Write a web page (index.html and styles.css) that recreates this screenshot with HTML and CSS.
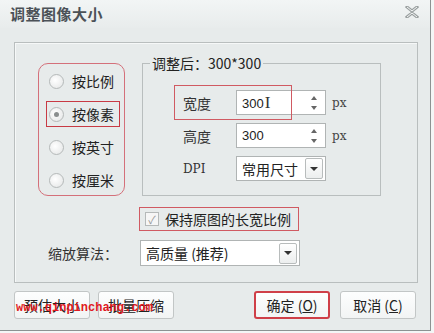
FILE: index.html
```html
<!DOCTYPE html>
<html lang="zh-CN">
<head>
  <meta charset="UTF-8" />
  <title>调整图像大小</title>
  <link rel="stylesheet" href="styles.css">
</head>
<body>
  <div class="window">
    <div class="titlebar">
      <span class="title">调整图像大小</span>
      <svg class="close" width="14" height="12" viewBox="0 0 14 12">
        <path d="M2 1 L7 5 L12 1 M2 11 L7 7 L12 11 M7 5 L7 7" stroke="#9aa0a0" stroke-width="3" fill="none" stroke-linecap="square"/>
        <path d="M2 1 L7 5 L12 1 M2 11 L7 7 L12 11" stroke="#f4f6f6" stroke-width="1" fill="none"/>
      </svg>
    </div>

    <div class="group">
      <div class="top-row">
        <div class="mode-box">
          <label class="mode"><span class="radio"></span>按比例</label>
          <label class="mode selected"><span class="radio checked"></span>按像素</label>
          <label class="mode"><span class="radio"></span>按英寸</label>
          <label class="mode"><span class="radio"></span>按厘米</label>
        </div>

        <fieldset class="size-box">
          <legend>调整后：300*300</legend>
          <div class="size-grid">
            <div class="mark"></div>
            <span class="size-label">宽度</span>
            <div class="spin">
              <span class="value">300<span class="caret">I</span></span>
              <span class="arrows"><i class="up"></i><i class="down"></i></span>
            </div>
            <span class="unit">px</span>

            <span class="size-label">高度</span>
            <div class="spin">
              <span class="value">300</span>
              <span class="arrows"><i class="up"></i><i class="down"></i></span>
            </div>
            <span class="unit">px</span>

            <span class="size-label dpi">DPI</span>
            <div class="select small">
              <span class="value">常用尺寸</span>
              <span class="drop"><i></i></span>
            </div>
          </div>
        </fieldset>
      </div>

      <label class="keep">
        <span class="check">✓</span>保持原图的长宽比例
      </label>

      <div class="algo-row">
        <span class="algo-label">缩放算法：</span>
        <div class="select wide">
          <span class="value">高质量 (推荐)</span>
          <span class="drop"><i></i></span>
        </div>
      </div>
    </div>

    <div class="buttons">
      <button class="btn">预估大小</button>
      <button class="btn">批量压缩</button>
      <span class="spacer"></span>
      <button class="btn primary">确定 (<u>O</u>)</button>
      <button class="btn">取消 (<u>C</u>)</button>
      <span class="watermark">www.qinpinchang.com</span>
    </div>
  </div>
</body>
</html>
```

FILE: styles.css
```css
body {
  margin: 0;
  background: #f4f6f6;
  font-family: "Noto Sans CJK SC", "Liberation Sans", sans-serif;
  font-size: 14px;
  color: #222;
}

.window {
  position: relative;
  width: 430px;
  height: 330px;
  background: #e7ebeb;
  border-right: 1px solid #8c9292;
  border-bottom: 1px solid #8c9292;
}

.titlebar {
  height: 28px;
  display: flex;
  align-items: center;
  justify-content: space-between;
  padding: 0 11px 0 10px;
  background: linear-gradient(#f2f5f5, #e8ecec);
}

.title {
  font-weight: bold;
  font-size: 15px;
  color: #4b5157;
  letter-spacing: 0.5px;
  margin-top: -2px;
}

.close {
  margin-top: -4px;
}

.group {
  margin: 14px 0 0 14px;
  width: 402px;
  height: 239px;
  border: 1px solid #b9bebe;
  box-shadow: inset 1px 1px 0 #f6f8f8;
}

.top-row {
  display: flex;
  align-items: flex-start;
  gap: 17px;
  padding: 20px 0 0 23px;
}

.mode-box {
  width: 78px;
  height: 127px;
  border: 1.5px solid #d4707a;
  border-radius: 10px;
  padding: 4px 0 0 7px;
  display: flex;
  flex-direction: column;
  gap: 7px;
}

.mode {
  width: 70px;
  height: 24px;
  display: flex;
  align-items: center;
  gap: 8px;
  padding-left: 2px;
  border: 1px solid transparent;
  font-size: 14px;
  color: #222;
}

.mode.selected {
  border-color: #c83a44;
}

.radio {
  width: 13px;
  height: 13px;
  border-radius: 50%;
  border: 1px solid #b5b9b9;
  background: radial-gradient(circle at 40% 40%, #ffffff, #e2e4e4);
  display: flex;
  align-items: center;
  justify-content: center;
}

.radio.checked::after {
  content: "";
  width: 5px;
  height: 5px;
  border-radius: 50%;
  background: #8a8e8e;
}

.size-box {
  margin: -8px 0 0 0;
  width: 197px;
  height: 120px;
  border: 1px solid #b9bebe;
  padding: 19px 0 0 40px;
}

.size-box legend {
  padding: 0 2px;
  margin-left: -33px;
  font-size: 14px;
  color: #222;
  line-height: 16px;
}

.size-grid {
  position: relative;
  display: grid;
  grid-template-columns: 53px 90px auto;
  grid-auto-rows: 25px;
  row-gap: 8px;
  align-items: center;
}

.mark {
  position: absolute;
  left: -9px;
  top: -5px;
  width: 116px;
  height: 33px;
  border: 1px solid #d05a62;
}

.size-label {
  font-size: 14px;
  color: #333;
}

.size-label.dpi {
  font-family: "DejaVu Serif", "Liberation Serif", serif;
  font-size: 12px;
}

.spin,
.select {
  height: 25px;
  box-sizing: border-box;
  background: #fff;
  border: 1px solid #b0b4b4;
  display: flex;
  align-items: center;
  justify-content: space-between;
}

.spin .value,
.select .value {
  padding-left: 5px;
  font-family: "Liberation Sans", "Noto Sans CJK SC", sans-serif;
  font-size: 13px;
  color: #222;
}

.select .value {
  font-family: "Noto Sans CJK SC", sans-serif;
  font-size: 14px;
}

.caret {
  font-family: "Liberation Serif", serif;
  font-size: 17px;
  color: #333;
  margin-left: 1px;
}

.arrows {
  display: flex;
  flex-direction: column;
  gap: 6px;
  padding-right: 8px;
}

.arrows i {
  width: 0;
  height: 0;
  border-left: 3px solid transparent;
  border-right: 3px solid transparent;
}

.arrows .up {
  border-bottom: 4px solid #666;
}

.arrows .down {
  border-top: 4px solid #666;
}

.unit {
  padding-left: 6px;
  font-family: "DejaVu Serif", "Liberation Serif", serif;
  font-size: 12px;
  color: #444;
}

.drop {
  width: 16px;
  height: 19px;
  margin-right: 2px;
  border: 1px solid #b8bcbc;
  border-radius: 2px;
  background: linear-gradient(#ffffff, #eceeee);
  display: flex;
  align-items: center;
  justify-content: center;
}

.drop i {
  width: 0;
  height: 0;
  border-left: 4px solid transparent;
  border-right: 4px solid transparent;
  border-top: 4px solid #333;
}

.keep {
  margin: 11px 0 0 124px;
  width: 153px;
  height: 22px;
  border: 1px solid #d05a62;
  display: flex;
  align-items: center;
  gap: 6px;
  padding-left: 5px;
  font-size: 14px;
  color: #222;
}

.check {
  width: 12px;
  height: 12px;
  border: 1px solid #b5b9b9;
  background: #f6f6f6;
  color: #999;
  font-size: 11px;
  line-height: 12px;
  text-align: center;
}

.algo-row {
  display: flex;
  align-items: center;
  margin: 9px 0 0 33px;
}

.algo-label {
  width: 92px;
  font-size: 14px;
  color: #333;
}

.select.wide {
  width: 160px;
  height: 26px;
}

.select.small {
  width: 90px;
}

.buttons {
  position: relative;
  display: flex;
  gap: 8px;
  margin: 8px 0 0 14px;
  width: 402px;
}

.spacer {
  flex: 1;
}

.btn {
  width: 76px;
  height: 28px;
  padding: 0;
  border: 1px solid #c2c6c6;
  border-radius: 3px;
  background: linear-gradient(#fdfefe, #f2f4f4);
  font-family: "Noto Sans CJK SC", sans-serif;
  font-size: 14px;
  color: #222;
}

.btn.primary {
  border: 2px solid #cf3f48;
  margin-right: 2px;
}

.watermark {
  position: absolute;
  left: 2px;
  top: 10px;
  font-family: "Liberation Mono", monospace;
  font-weight: bold;
  font-size: 12px;
  color: #e01a22;
}
```
